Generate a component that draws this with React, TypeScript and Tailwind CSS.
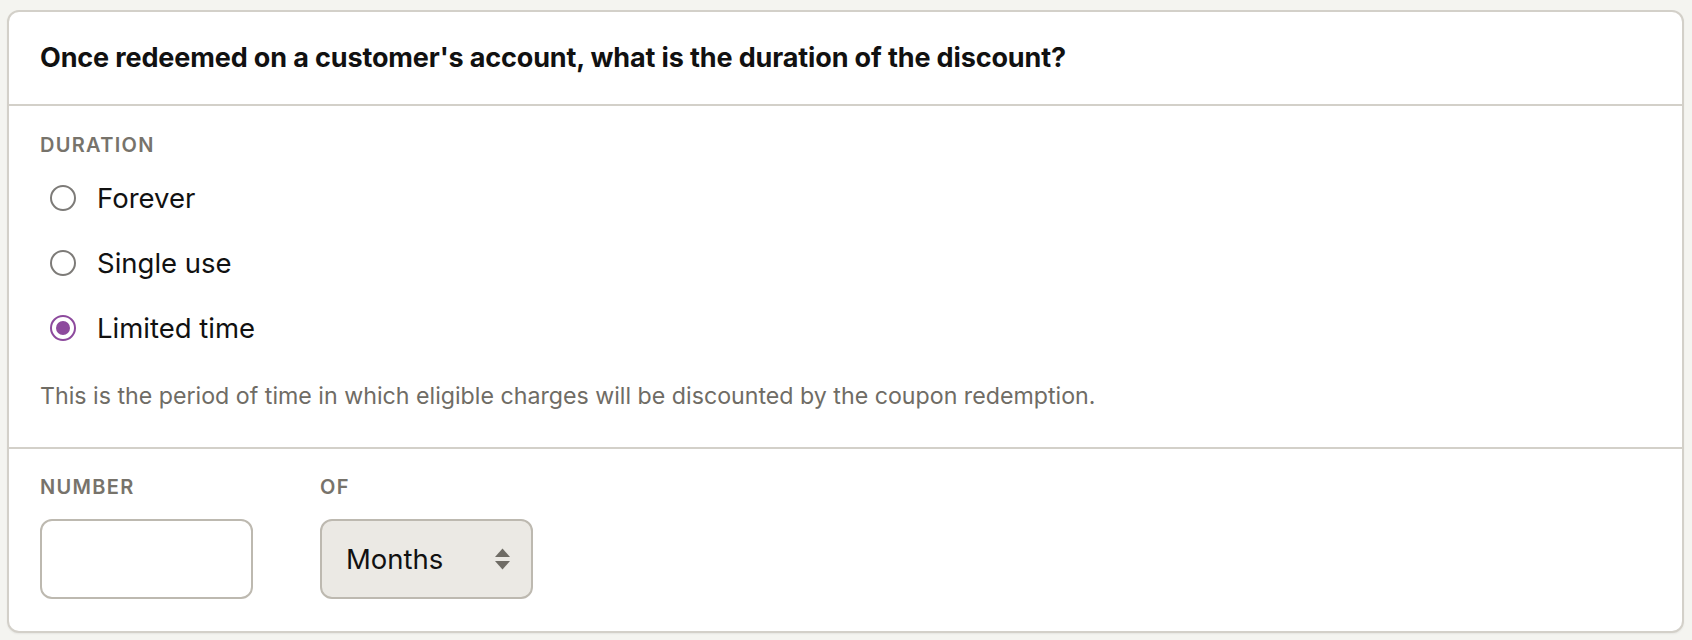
import { useState } from "react"

const options = [
  { id: "forever", label: "Forever" },
  { id: "once", label: "Single use" },
  { id: "repeating", label: "Limited time" },
]

function Radio({ checked }: { checked: boolean }) {
  return (
    <span
      className={
        checked
          ? "flex h-[26px] w-[26px] items-center justify-center rounded-full border-2 border-[#8d4a9d]"
          : "flex h-[26px] w-[26px] items-center justify-center rounded-full border-2 border-[#7d7b78]"
      }
    >
      {checked && <span className="h-[14px] w-[14px] rounded-full bg-[#8d4a9d]" />}
    </span>
  )
}

export default function App() {
  const [duration, setDuration] = useState("repeating")

  return (
    <div
      className="min-h-[640px] w-full bg-[#f4f4f0] pt-[10px] pr-[8px] pb-[9px] pl-[7px] text-[#111111]"
      style={{ fontFamily: "Inter, 'Noto Sans', sans-serif" }}
    >
      <div className="overflow-hidden rounded-[12px] border-2 border-[#d3d0c9] bg-white shadow-[0_1px_2px_rgba(0,0,0,0.06)]">
        <div className="flex h-[92px] items-center px-[31px]">
          <h2 className="text-[27px] font-bold leading-[34px] tracking-[-0.005em]">
            Once redeemed on a customer's account, what is the duration of the discount?
          </h2>
        </div>

        <div className="border-t-2 border-[#d3d0c9] px-[31px] pt-[27px] pb-[35px]">
          <div className="text-[20px] font-semibold uppercase leading-[24px] tracking-[0.065em] text-[#77736b]">
            Duration
          </div>
          <div className="mt-[17px] flex flex-col gap-[17px]">
            {options.map((o) => (
              <label
                key={o.id}
                onClick={() => setDuration(o.id)}
                className="flex h-[48px] cursor-pointer items-center gap-[21px] pl-[10px]"
              >
                <Radio checked={duration === o.id} />
                <span className="text-[27.5px] leading-[34px] text-[#111111]">{o.label}</span>
              </label>
            ))}
          </div>
          <p className="mt-[28px] text-[23.2px] leading-[32px] text-[#6f6c65]">
            This is the period of time in which eligible charges will be discounted by the coupon redemption.
          </p>
        </div>

        <div className="flex gap-[67px] border-t-2 border-[#d3d0c9] px-[31px] pt-[26px] pb-[32px]">
          <div className="flex w-[213px] flex-col gap-[20px]">
            <div className="text-[20px] font-semibold uppercase leading-[24px] tracking-[0.065em] text-[#77736b]">
              Number
            </div>
            <input
              type="text"
              className="h-[80px] w-full rounded-[12px] border-2 border-[#bdb9b0] bg-white px-[20px] text-[27px] outline-none"
            />
          </div>
          <div className="flex w-[213px] flex-col gap-[20px]">
            <div className="text-[20px] font-semibold uppercase leading-[24px] tracking-[0.065em] text-[#77736b]">
              Of
            </div>
            <div className="flex h-[80px] w-full items-center justify-between rounded-[12px] border-2 border-[#bdb9b0] bg-[#ebe9e4] pr-[20px] pl-[24px]">
              <span className="text-[27.5px] leading-[34px] text-[#111111]">Months</span>
              <svg width="17" height="24" viewBox="0 0 17 24" className="text-[#6f6c65]">
                <path d="M8.5 1.5 L16 10 H1 Z" fill="currentColor" />
                <path d="M8.5 22.5 L16 14 H1 Z" fill="currentColor" />
              </svg>
            </div>
          </div>
        </div>
      </div>
    </div>
  )
}
